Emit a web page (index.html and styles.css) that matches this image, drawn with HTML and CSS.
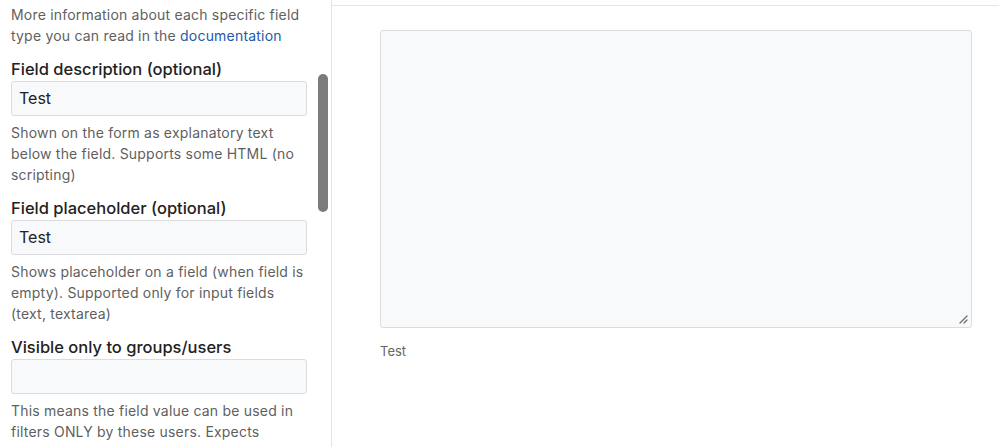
FILE: index.html
```html
<!DOCTYPE html>
<html>
<head>
<meta charset="utf-8">
<link rel="stylesheet" href="styles.css">
</head>
<body>
<div class="page">
  <aside class="sidebar">
    <div class="scroll">
      <p class="help">More information about each specific field type you can read in the <a href="#">documentation</a></p>
      <div class="field">
        <label class="label">Field description (optional)</label>
        <div class="input">Test</div>
        <p class="help">Shown on the form as explanatory text below the field. Supports some HTML (no scripting)</p>
      </div>
      <div class="field">
        <label class="label">Field placeholder (optional)</label>
        <div class="input">Test</div>
        <p class="help">Shows placeholder on a field (when field is empty). Supported only for input fields (text, textarea)</p>
      </div>
      <div class="field">
        <label class="label">Visible only to groups/users</label>
        <div class="input"></div>
        <p class="help">This means the field value can be used in filters ONLY by these users. Expects comma separated list of groups</p>
      </div>
    </div>
    <div class="thumb"></div>
  </aside>
  <main class="preview">
    <div class="topline"></div>
    <div class="content">
      <div class="textarea">
        <svg class="grip" width="10" height="10" viewBox="0 0 10 10"><path d="M9 2 L2 9 M9 6 L6 9" stroke="#6f6f6f" stroke-width="1.3" stroke-linecap="round"/></svg>
      </div>
      <p class="desc">Test</p>
    </div>
  </main>
</div>
</body>
</html>
```
FILE: styles.css
```css
html, body { margin: 0; padding: 0; background: #fff; }
body { font-family: Inter, "Noto Sans", sans-serif; overflow: hidden; height: 447px; }
.page { display: flex; height: 447px; }
.sidebar {
  flex: none; width: 332px; border-right: 1px solid #e3e3e3;
  position: relative; overflow: hidden; box-sizing: border-box;
}
.scroll { padding: 4px 18px 0 11px; }
.help { margin: 0; font-size: 14px; line-height: 21px; color: #5f5f5f; letter-spacing: 0.2px; }
.help a { color: #1f5aa6; text-decoration: none; }
.field { margin-top: 12px; }
.label { display: block; font-size: 16.5px; font-weight: 500; color: #222; line-height: 22px; margin-bottom: 1px; }
.input {
  box-sizing: border-box; width: 296px; height: 35px; border: 1px solid #dcdcdc; border-radius: 3px;
  background: #f8f9fb; padding: 0 7px; font-size: 16px; line-height: 33px; color: #222; margin-bottom: 6px;
}
.thumb {
  position: absolute; left: 318px; top: 74px; width: 10px; height: 138px; border-radius: 5px; background: #7b7b7b;
}
.preview { flex: 1; display: flex; flex-direction: column; }
.topline { height: 5px; border-bottom: 1px solid #e6e6e6; }
.content { padding: 24px 27px 0 48px; }
.textarea {
  box-sizing: border-box; height: 298px; border: 1px solid #dcdcdc; border-radius: 3px; background: #f8f9fb;
  position: relative;
}
.grip { position: absolute; right: 3px; bottom: 3px; }
.desc { margin: 14px 0 0 0; font-size: 13px; color: #666; line-height: 18px; }
```
